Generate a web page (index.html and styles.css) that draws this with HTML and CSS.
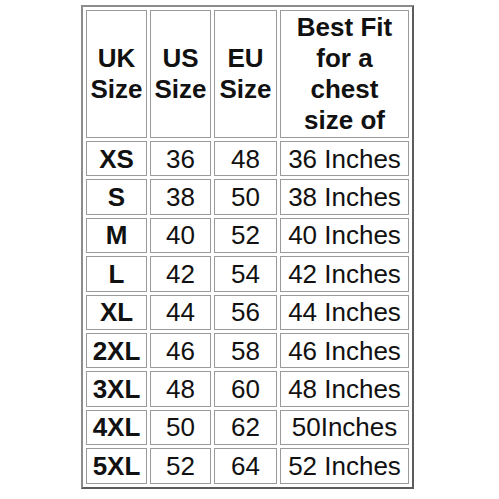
FILE: index.html
```html
<!DOCTYPE html>
<html lang="en">
<head>
<meta charset="utf-8">
<title>Size Chart</title>
<link rel="stylesheet" href="styles.css">
</head>
<body>
<table class="chart">
  <colgroup>
    <col class="c-uk">
    <col class="c-us">
    <col class="c-eu">
    <col class="c-fit">
  </colgroup>
  <thead>
    <tr class="head">
      <th>UK<br>Size</th>
      <th>US<br>Size</th>
      <th>EU<br>Size</th>
      <th>Best Fit<br>for a<br>chest<br>size of</th>
    </tr>
  </thead>
  <tbody>
    <tr><th>XS</th><td>36</td><td>48</td><td>36 Inches</td></tr>
    <tr><th>S</th><td>38</td><td>50</td><td>38 Inches</td></tr>
    <tr><th>M</th><td>40</td><td>52</td><td>40 Inches</td></tr>
    <tr><th>L</th><td>42</td><td>54</td><td>42 Inches</td></tr>
    <tr><th>XL</th><td>44</td><td>56</td><td>44 Inches</td></tr>
    <tr><th>2XL</th><td>46</td><td>58</td><td>46 Inches</td></tr>
    <tr><th>3XL</th><td>48</td><td>60</td><td>48 Inches</td></tr>
    <tr><th>4XL</th><td>50</td><td>62</td><td>50Inches</td></tr>
    <tr><th>5XL</th><td>52</td><td>64</td><td>52 Inches</td></tr>
  </tbody>
</table>
</body>
</html>
```

FILE: styles.css
```css
html, body {
  margin: 0;
  padding: 0;
  background: #ffffff;
}

body {
  font-family: "Liberation Sans", Arial, sans-serif;
  color: #111111;
}

.chart {
  margin: 5px 0 0 81px;
  border-collapse: separate;
  border-spacing: 3px;
  border-style: solid;
  border-width: 2px;
  border-color: #8c8c8c #5c5c5c #5c5c5c #8c8c8c;
  table-layout: fixed;
  width: 333px;
  background: #ffffff;
}

.c-uk { width: 61px; }
.c-us { width: 61px; }
.c-eu { width: 63px; }
.c-fit { width: 129px; }

.chart th,
.chart td {
  box-sizing: border-box;
  border: 1px solid #9a9a9a;
  padding: 0;
  text-align: center;
  vertical-align: middle;
  font-size: 26px;
  line-height: 30px;
  height: 35.4px;
  white-space: nowrap;
}

.chart th {
  font-weight: bold;
}

.chart td {
  font-weight: normal;
}

.chart .head th {
  height: 128px;
  line-height: 31px;
}
```
